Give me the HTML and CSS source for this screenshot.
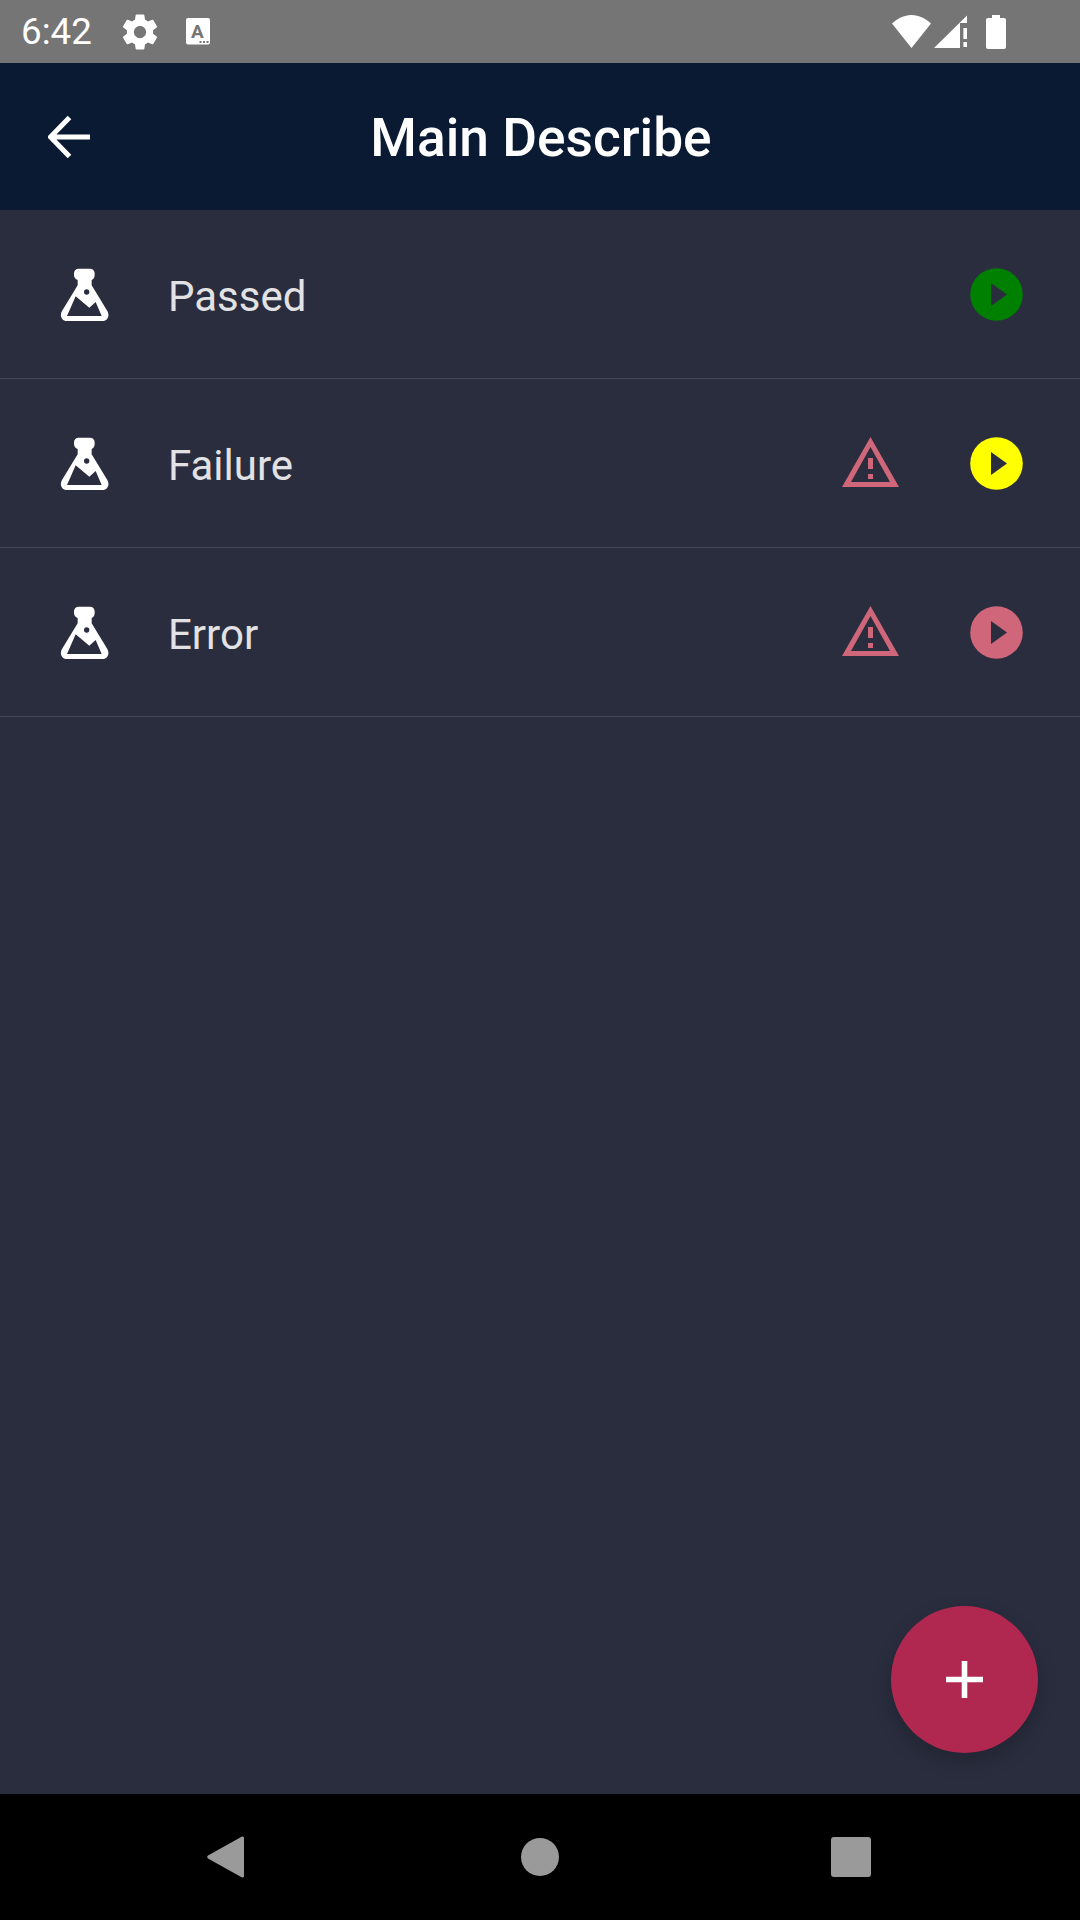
FILE: index.html
```html
<!DOCTYPE html>
<html lang="en">
<head>
<meta charset="utf-8">
<title>Main Describe</title>
<link rel="stylesheet" href="styles.css">
</head>
<body>
<div class="screen">
  <div class="status-bar">
    <span class="time">6:42</span>
    <svg class="gear" viewBox="0 0 24 24"><path fill="#fff" d="M19.43 12.98c.04-.32.07-.64.07-.98s-.03-.66-.07-.98l2.11-1.65c.19-.15.24-.42.12-.64l-2-3.46c-.12-.22-.39-.3-.61-.22l-2.49 1c-.52-.4-1.08-.73-1.69-.98l-.38-2.65C14.46 2.18 14.25 2 14 2h-4c-.25 0-.46.18-.49.42l-.38 2.65c-.61.25-1.17.59-1.69.98l-2.49-1c-.23-.09-.49 0-.61.22l-2 3.46c-.13.22-.07.49.12.64l2.11 1.65c-.04.32-.07.65-.07.98s.03.66.07.98l-2.11 1.65c-.19.15-.24.42-.12.64l2 3.46c.12.22.39.3.61.22l2.49-1c.52.4 1.08.73 1.69.98l.38 2.65c.03.24.24.42.49.42h4c.25 0 .46-.18.49-.42l.38-2.65c.61-.25 1.17-.59 1.69-.98l2.49 1c.23.09.49 0 .61-.22l2-3.46c.12-.22.07-.49-.12-.64l-2.11-1.65zM12 15.5c-1.93 0-3.5-1.57-3.5-3.5s1.57-3.5 3.5-3.5 3.5 1.57 3.5 3.5-1.57 3.5-3.5 3.5z"/></svg>
    <svg class="kbd" viewBox="0 0 24 27">
      <rect width="24" height="26.6" rx="2" fill="#fff"/>
      <text class="kbd-letter" x="11.5" y="19.5">A</text>
      <rect x="13.5" y="23" width="2" height="2" fill="#757575"/>
      <rect x="17" y="23" width="2" height="2" fill="#757575"/>
      <rect x="20.5" y="23" width="2" height="2" fill="#757575"/>
    </svg>
    <span class="status-spacer"></span>
    <svg class="wifi" viewBox="0 0 39 33"><path fill="#fff" d="M19.5 33 0 8.6C5 3.600 12 0 19.5 0S34 3.600 39 8.600z"/></svg>
    <svg class="signal" viewBox="0 0 33.400 33"><path fill="#fff" d="M0 33 33.400 0v8H26v25zM29.400 13h4v11h-4zM29.400 27h4v5h-4z"/></svg>
    <svg class="battery" viewBox="0 0 20 34"><path fill="#fff" d="M6 0h8v3h4a2 2 0 0 1 2 2v27a2 2 0 0 1-2 2H2a2 2 0 0 1-2-2V5a2 2 0 0 1 2-2h4z"/></svg>
  </div>

  <header class="app-bar">
    <svg class="back" viewBox="0 0 42 42"><path fill="none" stroke="#fff" stroke-width="5" d="M21.500 1.500 2.500 21l19 19.500M3 21h39"/></svg>
    <h1 class="title">Main Describe</h1>
    <span></span>
  </header>

  <main class="content">
    <div class="row">
      <svg class="flask" viewBox="90 80 150 165"><path fill="#fff" d="M146 85h34c8 0 14 6 14 14v5c0 8-4 13-9 15v16l47 77c8 13 1 30-14 30H110c-15 0-22-17-14-30l47-77v-16c-6-2-11-7-11-15v-5c0-8 6-14 14-14z"/><path class="flask-hole" d="M111 227 137 168 178 202 197 185 215 227z"/><circle class="flask-hole" cx="170" cy="155" r="8"/></svg>
      <span class="label">Passed</span>
      <svg class="play" viewBox="0 0 53 53"><circle cx="26.5" cy="26.5" r="26.3" fill="#008000"/><path class="play-mark" d="M21 15v23l16-11.500z"/></svg>
    </div>
    <div class="row">
      <svg class="flask" viewBox="90 80 150 165"><path fill="#fff" d="M146 85h34c8 0 14 6 14 14v5c0 8-4 13-9 15v16l47 77c8 13 1 30-14 30H110c-15 0-22-17-14-30l47-77v-16c-6-2-11-7-11-15v-5c0-8 6-14 14-14z"/><path class="flask-hole" d="M111 227 137 168 178 202 197 185 215 227z"/><circle class="flask-hole" cx="170" cy="155" r="8"/></svg>
      <span class="label">Failure</span>
      <svg class="warn" viewBox="0 0 57 50"><path fill="#cf6679" fill-rule="evenodd" d="M28.500 0 57 50H0zM28.500 10 9 45h39z"/><path fill="#cf6679" d="M26 21h5v11h-5zM26 37h5v5h-5z"/></svg>
      <svg class="play" viewBox="0 0 53 53"><circle cx="26.5" cy="26.5" r="26.3" fill="#ffff00"/><path class="play-mark" d="M21 15v23l16-11.500z"/></svg>
    </div>
    <div class="row">
      <svg class="flask" viewBox="90 80 150 165"><path fill="#fff" d="M146 85h34c8 0 14 6 14 14v5c0 8-4 13-9 15v16l47 77c8 13 1 30-14 30H110c-15 0-22-17-14-30l47-77v-16c-6-2-11-7-11-15v-5c0-8 6-14 14-14z"/><path class="flask-hole" d="M111 227 137 168 178 202 197 185 215 227z"/><circle class="flask-hole" cx="170" cy="155" r="8"/></svg>
      <span class="label">Error</span>
      <svg class="warn" viewBox="0 0 57 50"><path fill="#cf6679" fill-rule="evenodd" d="M28.500 0 57 50H0zM28.500 10 9 45h39z"/><path fill="#cf6679" d="M26 21h5v11h-5zM26 37h5v5h-5z"/></svg>
      <svg class="play" viewBox="0 0 53 53"><circle cx="26.5" cy="26.5" r="26.3" fill="#cf6679"/><path class="play-mark" d="M21 15v23l16-11.500z"/></svg>
    </div>
    <button class="fab" type="button" aria-label="Add">
      <svg class="plus" viewBox="0 0 37 37"><path fill="#fff" d="M15.700 0h5.600v15.700H37v5.600H21.300V37h-5.600V21.300H0v-5.600h15.700z"/></svg>
    </button>
  </main>

  <nav class="nav-bar">
    <svg class="nav-back" viewBox="0 0 37 42"><path fill="#9a9a9a" d="M35 .5a1.500 1.500 0 0 1 2 1.500v38a1.500 1.500 0 0 1-2 1.500L1 22.500a2 2 0 0 1 0-3z"/></svg>
    <span class="nav-home"></span>
    <span class="nav-recent"></span>
  </nav>
</div>
</body>
</html>
```

FILE: styles.css
```css
* { box-sizing: border-box; }

html, body {
  margin: 0;
  padding: 0;
}

body {
  font-family: Roboto, "Noto Sans", sans-serif;
  background: #2a2d3e;
}

.screen {
  width: 1080px;
  height: 1920px;
  display: flex;
  flex-direction: column;
  overflow: hidden;
}

.status-bar {
  flex: 0 0 63px;
  background: #757575;
  display: flex;
  align-items: center;
  padding: 0 74px 0 21px;
  color: #fff;
}

.time {
  font-size: 36.75px;
  line-height: 1;
  width: 98px;
  padding-top: 2px;
  flex: none;
}

.gear { width: 42px; height: 42px; flex: none; }

.kbd {
  width: 24px;
  height: 27px;
  margin-left: 25px;
  flex: none;
}

.kbd-letter {
  font-family: Roboto, sans-serif;
  font-weight: 700;
  font-size: 19px;
  fill: #757575;
  text-anchor: middle;
}

.status-spacer { flex: 1; }

.wifi { width: 39px; height: 33px; flex: none; }
.signal { width: 33.4px; height: 33px; margin-left: 3px; flex: none; }
.battery { width: 20px; height: 34px; margin-left: 19px; flex: none; }

.app-bar {
  flex: 0 0 147px;
  background: #0a1a33;
  display: grid;
  grid-template-columns: 1fr auto 1fr;
  align-items: center;
  padding: 0 48px;
}

.back { width: 42px; height: 42px; display: block; }

.title {
  margin: 0 0 0 2px;
  padding-top: 5px;
  color: #fff;
  font-size: 53.3px;
  font-weight: 500;
  line-height: 1;
}

.content {
  flex: 1;
  position: relative;
  background: #2a2d3e;
}

.row {
  height: 169px;
  border-bottom: 1px solid #43465a;
  display: flex;
  align-items: center;
  padding: 0 57px 0 60px;
}

.flask {
  width: 50px;
  height: 55px;
  flex: none;
}

.flask-hole { fill: #2a2d3e; }
.play-mark { fill: #2a2d3e; }

.label {
  flex: 1;
  margin-left: 58px;
  padding-top: 6px;
  color: #e2e2e5;
  font-size: 42px;
  line-height: 1;
}

.warn {
  width: 57px;
  height: 50px;
  margin: 0 71px 2px 0;
  flex: none;
}

.play { width: 53px; height: 53px; flex: none; }

.fab {
  position: absolute;
  left: 891px;
  top: 1396px;
  width: 147px;
  height: 147px;
  padding: 0;
  border: 0;
  border-radius: 50%;
  background: #b0284f;
  box-shadow: 0 8px 20px rgba(0, 0, 0, 0.2);
  display: flex;
  align-items: center;
  justify-content: center;
}

.plus { width: 37px; height: 37px; display: block; }

.nav-bar {
  flex: 0 0 126px;
  background: #000;
  display: grid;
  grid-template-columns: 1fr 40px 1fr;
  align-items: center;
  padding: 0 209px 0 207px;
}

.nav-back { width: 37px; height: 42px; display: block; }

.nav-home {
  width: 38px;
  height: 38px;
  margin-left: 2px;
  justify-self: center;
  border-radius: 50%;
  background: #9a9a9a;
}

.nav-recent {
  width: 40px;
  height: 40px;
  justify-self: end;
  border-radius: 3px;
  background: #9a9a9a;
}
```
